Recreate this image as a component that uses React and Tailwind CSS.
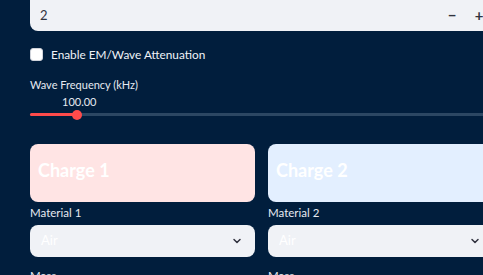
import React from "react";

function Chevron() {
  return (
    <svg width="12" height="12" viewBox="0 0 24 24" fill="none" stroke="#31333f" strokeWidth="3" strokeLinecap="round" strokeLinejoin="round">
      <path d="M6 9l6 6 6-6" />
    </svg>
  );
}

function MaterialColumn({ title, label, boxBg }) {
  return (
    <div className="flex flex-col">
      <div className={`h-[58px] rounded-lg ${boxBg} flex items-center px-2 pb-[6px]`}>
        <span className="text-[18px] font-bold text-white leading-none">{title}</span>
      </div>
      <div className="mt-[3px] text-[11.5px] text-[#e6eaf1] leading-[16px]">{label}</div>
      <div className="mt-[4px] h-[32px] rounded-lg bg-[#f0f2f6] flex items-center justify-between pl-[11px] pr-[12px]">
        <span className="text-[13px] text-white">Air</span>
        <Chevron />
      </div>
      <div className="mt-[11px] text-[11.5px] text-[#e6eaf1] leading-[16px]">Mass</div>
    </div>
  );
}

export default function App() {
  return (
    <div className="w-[483px] h-[275px] overflow-hidden bg-[#011e3d] font-['Lato','Noto_Sans',sans-serif]">
      <div className="w-[463px] ml-[30px] -mt-[8px]">
        <div className="h-[39px] rounded-lg bg-[#f0f2f6] flex items-center justify-between pl-[10px]">
          <span className="text-[13px] text-[#31333f] mt-[8px]">2</span>
          <div className="flex items-center mt-[8px]">
            <span className="w-[26px] text-center text-[15px] font-bold text-[#31333f]">−</span>
            <span className="w-[28px] text-center text-[15px] font-bold text-[#31333f]">+</span>
          </div>
        </div>

        <label className="mt-[15px] flex items-center gap-[8px]">
          <span className="w-[13px] h-[13px] rounded-[3px] bg-white border border-[#d0d3da]" />
          <span className="text-[11.8px] text-[#f0f3f8]">Enable EM/Wave Attenuation</span>
        </label>

        <div className="mt-[14px] text-[11px] text-[#e6eaf1] leading-[14px]">Wave Frequency (kHz)</div>
        <div className="relative h-[28px]">
          <span className="absolute left-[32px] top-[2px] text-[11px] text-[#e6eaf1]">100.00</span>
          <div className="absolute left-0 right-0 top-[21px] h-[3px] rounded bg-[#2c4763]" />
          <div className="absolute left-0 w-[47px] top-[21px] h-[3px] rounded bg-[#ff4b4b]" />
          <div className="absolute left-[42px] top-[18px] w-[10px] h-[10px] rounded-full bg-[#ff4b4b]" />
        </div>

        <div className="mt-[24px] grid grid-cols-2 gap-[13px]">
          <MaterialColumn title="Charge 1" label="Material 1" boxBg="bg-[#ffe4e4]" />
          <MaterialColumn title="Charge 2" label="Material 2" boxBg="bg-[#e3efff]" />
        </div>
      </div>
    </div>
  );
}
